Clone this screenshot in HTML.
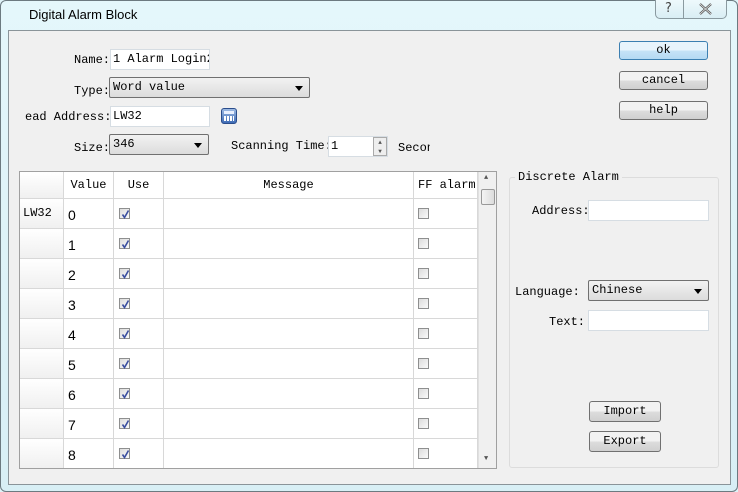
<!DOCTYPE html>
<html><head><style>
*{box-sizing:border-box;margin:0;padding:0}
body{width:738px;height:492px;position:relative;background:#dff3f8;font-family:"Liberation Mono","DejaVu Sans Mono",monospace;font-size:12px;color:#000;overflow:hidden}
.a{position:absolute}
.frame{left:0;top:0;width:738px;height:492px;border:1px solid #6c7a80;border-radius:6px;background:linear-gradient(#e4f7fb,#d8eff5)}
.title{left:29px;top:7px;font-family:"Liberation Sans",sans-serif;font-size:13px}
.panel{left:8px;top:30px;width:723px;height:455px;background:#f0f0f0;border:1px solid #8a9499}
.lbl{white-space:pre;font-family:"Liberation Mono","DejaVu Sans Mono",monospace}
.inp{background:#fff;border:1px solid #d6dde3;height:21px;padding:2px 2px;white-space:pre;overflow:hidden}
.combo{border:1px solid #707070;border-radius:2px;background:linear-gradient(#f2f2f2,#dcdcdc);height:21px;padding:2px 3px}
.combo:after{content:"";position:absolute;right:6px;top:8px;border:4px solid transparent;border-top:5px solid #000;border-bottom:0}
.btn{border:1px solid #707070;border-radius:3px;background:linear-gradient(#f2f2f2 50%,#dddddd 50%,#d0d0d0);text-align:center;height:19px;line-height:16px}
.tbl{left:19px;top:171px;width:478px;height:298px;background:#fff;border:1px solid #a0a0a0;overflow:hidden}
.cell{position:absolute;border-right:1px solid #d8d8d8;border-bottom:1px solid #d8d8d8;height:30px}
.rh{background:linear-gradient(#fff,#f0f0f0);}
.cb{position:absolute;width:11px;height:11px;border:1px solid #8e8f8f;background:linear-gradient(135deg,#dcdcdc,#fafafa)}
.ck svg{position:absolute;left:1px;top:1px}
</style></head><body>
<div class="a frame"></div>
<div class="a title">Digital Alarm Block</div>
<div class="a" style="left:655px;top:0;width:72px;height:19px;border:1px solid #8a9aa0;border-top:0;border-radius:0 0 5px 5px;background:linear-gradient(#eef9fc,#d9eef4)"></div>
<div class="a" style="left:683px;top:0;width:1px;height:19px;background:#8a9aa0"></div>
<div class="a" style="left:665px;top:1px;font-family:'DejaVu Sans';font-size:13px;color:#444">?</div>
<svg class="a" style="left:699px;top:3px" width="13" height="12"><path d="M1 1L12 11M12 1L1 11" stroke="#555" stroke-width="2.2" fill="none"/><path d="M1 1L12 11M12 1L1 11" stroke="#eee" stroke-width="0.8" fill="none"/></svg>
<div class="a panel"></div>

<div class="a lbl" style="left:74px;top:53px">Name:</div>
<div class="a inp" style="left:110px;top:49px;width:100px">1 Alarm Login2</div>
<div class="a lbl" style="left:74px;top:84px">Type:</div>
<div class="a combo" style="left:109px;top:77px;width:201px">Word value</div>
<div class="a lbl" style="left:25px;top:110px">ead Address:</div>
<div class="a inp" style="left:110px;top:106px;width:100px">LW32</div>
<div class="a" style="left:221px;top:108px;width:16px;height:16px;border:1px solid #2a4d8c;border-radius:3px;background:linear-gradient(#9dbbe4,#3e6bb5)"><div class="a" style="left:2px;top:2px;width:10px;height:3px;background:#e8f0ff"></div><div class="a" style="left:2px;top:7px;width:10px;height:5px;background:repeating-linear-gradient(90deg,#fff 0 2px,transparent 2px 3px)"></div></div>
<div class="a lbl" style="left:74px;top:141px">Size:</div>
<div class="a combo" style="left:109px;top:134px;width:100px">346</div>
<div class="a lbl" style="left:231px;top:139px">Scanning Time:</div>
<div class="a inp" style="left:328px;top:136px;width:60px">1</div>
<div class="a" style="left:373px;top:137px;width:14px;height:19px;border:1px solid #aaa;background:#eee;font-size:6px;line-height:9px;text-align:center;color:#555">▲<br>▼</div>
<div class="a" style="left:398px;top:141px;width:32px;overflow:hidden;white-space:pre">Second</div>

<div class="a btn" style="left:619px;top:41px;width:89px;border-color:#3c7fb1;background:linear-gradient(#e8f4fc 50%,#c6e3f7 50%,#b4d9f3)">ok</div>
<div class="a btn" style="left:619px;top:71px;width:89px">cancel</div>
<div class="a btn" style="left:619px;top:101px;width:89px">help</div>

<div class="a tbl">
<div class="cell rh" style="left:0;top:0;width:44px;height:27px"></div>
<div class="cell" style="left:44px;top:0;width:50px;height:27px;text-align:center;line-height:26px">Value</div>
<div class="cell" style="left:94px;top:0;width:50px;height:27px;text-align:center;line-height:26px">Use</div>
<div class="cell" style="left:144px;top:0;width:250px;height:27px;text-align:center;line-height:26px">Message</div>
<div class="cell" style="left:394px;top:0;width:64px;height:27px;line-height:26px;padding-left:4px;white-space:nowrap;overflow:hidden">FF alarm</div>
<div class="a" style="left:458px;top:0;width:19px;height:298px;background:#f0f0f0;border-left:1px solid #e0e0e0"></div>
<div class="a" style="left:461px;top:17px;width:14px;height:16px;border:1px solid #999;border-radius:2px;background:linear-gradient(90deg,#f4f4f4,#dcdcdc)"></div>
<div class="a" style="left:464px;top:2px;font-size:7px;color:#555">▲</div>
<div class="a" style="left:464px;top:283px;font-size:7px;color:#555">▼</div>
<div id="rows"></div>
</div>

<div class="a" style="left:509px;top:177px;width:210px;height:291px;border:1px solid #dcdcdc;border-radius:3px"></div>
<div class="a lbl" style="left:515px;top:170px;background:#f0f0f0;padding:0 3px">Discrete Alarm</div>
<div class="a lbl" style="left:532px;top:204px">Address:</div>
<div class="a inp" style="left:588px;top:200px;width:121px"></div>
<div class="a lbl" style="left:515px;top:285px">Language:</div>
<div class="a combo" style="left:588px;top:280px;width:121px">Chinese</div>
<div class="a lbl" style="left:549px;top:315px">Text:</div>
<div class="a inp" style="left:588px;top:310px;width:121px"></div>
<div class="a btn" style="left:589px;top:401px;width:72px;height:21px;line-height:18px">Import</div>
<div class="a btn" style="left:589px;top:431px;width:72px;height:21px;line-height:18px">Export</div>

<script>
var h='';for(var i=0;i<9;i++){var t=27+i*30;
h+='<div class="cell rh" style="left:0;top:'+t+'px;width:44px;line-height:29px;padding-left:3px">'+(i==0?'LW32':'')+'</div>';
h+='<div class="cell" style="left:44px;top:'+t+'px;width:50px;line-height:32px;padding-left:4px;font-family:Liberation Sans;font-size:14px">'+i+'</div>';
h+='<div class="cell" style="left:94px;top:'+t+'px;width:50px"><div class="cb ck" style="left:5px;top:9px"><svg width="9" height="9"><path d="M1.5 4.5L3.5 7.5L7.5 0.5" stroke="#3b4fa0" stroke-width="1.6" fill="none"/></svg></div></div>';
h+='<div class="cell" style="left:144px;top:'+t+'px;width:250px"></div>';
h+='<div class="cell" style="left:394px;top:'+t+'px;width:64px"><div class="cb" style="left:4px;top:9px"></div></div>';}
document.getElementById('rows').innerHTML=h;
</script>
</body></html>
